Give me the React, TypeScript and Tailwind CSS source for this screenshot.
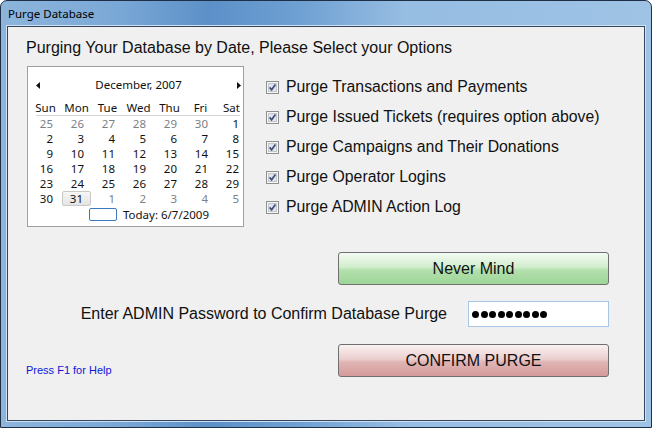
import React from "react";

type Day = { d: number; dim?: boolean; sel?: boolean };

const weeks: Day[][] = [
  [25, 26, 27, 28, 29, 30].map((d) => ({ d, dim: true })).concat([{ d: 1 }]),
  [2, 3, 4, 5, 6, 7, 8].map((d) => ({ d })),
  [9, 10, 11, 12, 13, 14, 15].map((d) => ({ d })),
  [16, 17, 18, 19, 20, 21, 22].map((d) => ({ d })),
  [23, 24, 25, 26, 27, 28, 29].map((d) => ({ d })),
  [{ d: 30 }, { d: 31, sel: true }, ...[1, 2, 3, 4, 5].map((d) => ({ d, dim: true }))],
];

const dayNames = ["Sun", "Mon", "Tue", "Wed", "Thu", "Fri", "Sat"];

const options = [
  "Purge Transactions and Payments",
  "Purge Issued Tickets (requires option above)",
  "Purge Campaigns and Their Donations",
  "Purge Operator Logins",
  "Purge ADMIN Action Log",
];

function CheckBox() {
  return (
    <svg width="13" height="13" viewBox="0 0 13 13" className="shrink-0">
      <rect x="0.5" y="0.5" width="12" height="12" fill="#f6f6f6" stroke="#8e8f8f" />
      <rect x="2.5" y="2.5" width="8" height="8" fill="#e2e4e8" stroke="#c4c7cc" />
      <path d="M3.6 6.4 L5.6 8.8 L9.4 3.6" stroke="#3d4f7f" strokeWidth="1.7" fill="none" />
    </svg>
  );
}

function Calendar() {
  return (
    <div className="w-[217px] h-[161px] border border-[#a0a0a0] bg-white font-['Noto_Sans',sans-serif] text-[11.5px] text-[#111] pt-[10px]">
      <div className="h-[16px] flex items-center pl-[8px] pr-[2px]">
        <svg width="4" height="7" viewBox="0 0 4 7">
          <path d="M4 0 L0 3.5 L4 7 Z" fill="#111" />
        </svg>
        <div className="flex-1 text-center leading-[16px]">December, 2007</div>
        <svg width="4" height="7" viewBox="0 0 4 7">
          <path d="M0 0 L4 3.5 L0 7 Z" fill="#111" />
        </svg>
      </div>
      <div className="ml-[2px] w-[217px]">
        <div className="grid grid-cols-[repeat(7,31px)] mt-[7px] h-[15px] leading-[15px]">
          {dayNames.map((n) => (
            <div key={n} className="text-center">
              {n}
            </div>
          ))}
        </div>
        <div className="h-px ml-[6px] w-[204px] bg-[#d6d6d6]" />
        {weeks.map((w, i) => (
          <div key={i} className="grid grid-cols-[repeat(7,31px)] h-[15px] leading-[15px]">
            {w.map((c, j) =>
              c.sel ? (
                <div
                  key={j}
                  className="mx-[1px] text-right pr-[7px] rounded-[2px] border border-[#c9c9c9] bg-[linear-gradient(#f6f6f6,#e4e4e4)] leading-[13px]"
                >
                  {c.d}
                </div>
              ) : (
                <div key={j} className={`text-right pr-[8px] ${c.dim ? "text-[#7b7f86]" : ""}`}>
                  {c.d}
                </div>
              )
            )}
          </div>
        ))}
      </div>
      <div className="flex items-center mt-[2px] ml-[61px] h-[13px]">
        <div className="w-[28px] h-[13px] border border-[#3a78c2] rounded-[2px]" />
        <span className="ml-[6px] leading-[13px]">Today: 6/7/2009</span>
      </div>
    </div>
  );
}

export default function App() {
  return (
    <div className="w-[652px] h-[428px] flex flex-col rounded-t-[7px] border border-[#1f3046] bg-[linear-gradient(90deg,#8db5dc_0%,#7aa8d6_18%,#5c90c8_32%,#6d9fd2_45%,#96bde2_62%,#9ec3e5_100%)] px-[6px] pb-[6px] overflow-hidden">
      <div className="h-[25px] shrink-0 flex items-center pl-[1px] font-['Noto_Sans',sans-serif] text-[11.5px] text-black">
        Purge Database
      </div>
      <div className="flex-1 border border-[#33465e] ring-1 ring-[#cfe1f3] bg-[#f0f0f0] font-['Liberation_Sans',Arial,sans-serif] text-[#111] flex flex-col pl-[18px] pt-[12px]">
        <div className="text-[16px] leading-[18px]">Purging Your Database by Date, Please Select your Options</div>
        <div className="flex mt-[9px] ml-[1px]">
          <Calendar />
          <div className="flex flex-col ml-[22px] mt-[6px]">
            {options.map((o) => (
              <div key={o} className="h-[30px] flex items-center">
                <CheckBox />
                <span className="ml-[7px] text-[15.8px] leading-[18px]">{o}</span>
              </div>
            ))}
          </div>
        </div>
        <button className="self-end mr-[35px] mt-[25px] w-[271px] h-[33px] rounded-[3px] border border-[#707070] bg-[linear-gradient(#f3fbf2,#d2eecd_45%,#b4e0ae_55%,#9dd597)] text-[16px] text-[#111]">
          Never Mind
        </button>
        <div className="flex items-center justify-end mr-[35px] mt-[16px]">
          <span className="text-[16px] leading-[18px]">Enter ADMIN Password to Confirm Database Purge</span>
          <div className="ml-[21px] w-[141px] h-[26px] border border-[#a7c6e4] bg-white flex items-center pl-[3px] gap-[1.5px]">
            {Array.from({ length: 9 }).map((_, i) => (
              <span key={i} className="w-[7px] h-[7px] rounded-full bg-black" />
            ))}
          </div>
        </div>
        <div className="flex items-end justify-between mr-[35px] mt-[17px]">
          <span className="font-['Liberation_Sans',Arial,sans-serif] text-[11px] leading-[13px] text-[#1414d8]">Press F1 for Help</span>
          <button className="w-[271px] h-[33px] rounded-[3px] border border-[#707070] bg-[linear-gradient(#faf1f1,#eccfcf_45%,#e0b4b4_55%,#d59b9b)] text-[16px] text-[#111]">
            CONFIRM PURGE
          </button>
        </div>
      </div>
    </div>
  );
}
